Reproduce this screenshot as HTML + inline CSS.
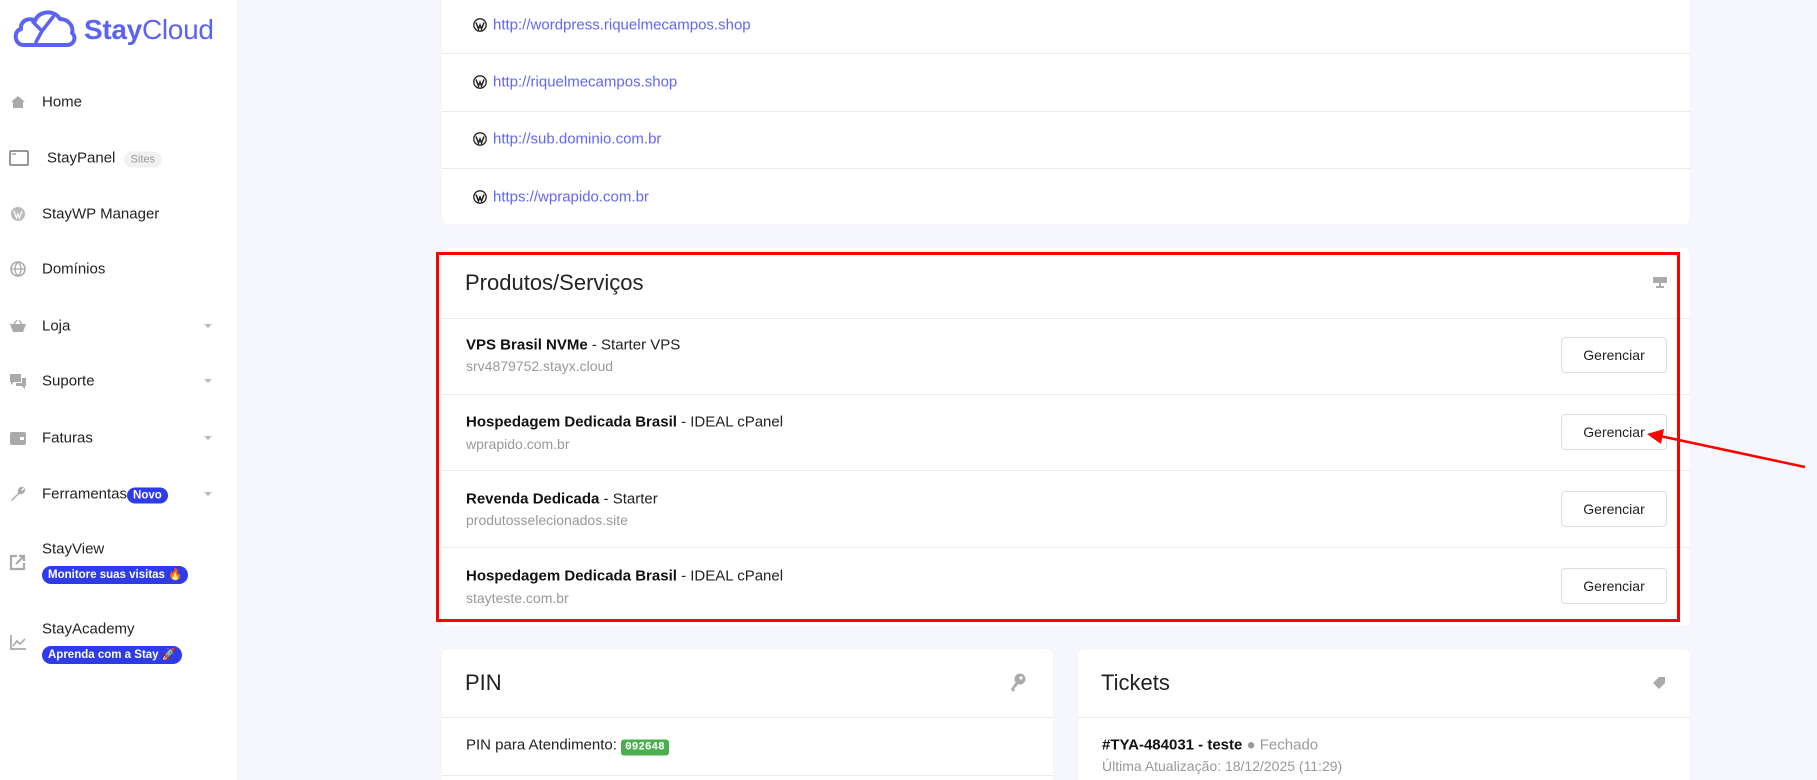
<!DOCTYPE html>
<html style="width:1817px;height:780px;overflow:hidden"><head><meta charset="utf-8"><style>
*{box-sizing:border-box;margin:0;padding:0}
html,body{width:1817px;height:780px;overflow:hidden}
body{background:#f6f7fc;font-family:"Liberation Sans",sans-serif;color:#222}
#wrap{position:relative;width:1817px;height:780px;overflow:hidden;background:#f6f7fc}
.side{position:absolute;left:0;top:0;width:238px;height:780px;background:#fff;border-right:1px solid #eef0f5}
.logo{position:absolute;left:12px;top:9px}
.logotxt{position:absolute;left:84px;top:14px;font-size:28px;color:#5b63f5;letter-spacing:-0.3px}
.logotxt b{font-weight:bold}
.mi{position:absolute;left:42px;font-size:15px;color:#222;transform:translateY(-50%)}
.ic{position:absolute;left:9px;width:18px;height:18px;transform:translateY(-50%)}
.chev{position:absolute;left:204px;width:0;height:0;border-left:4px solid transparent;border-right:4px solid transparent;border-top:4px solid #bbb}
.badge{position:absolute;left:42px;height:18px;border-radius:9px;background:#2e3be8;color:#fff;font-weight:bold;font-size:11.5px;line-height:18px;padding:0 6px}
.card{position:absolute;background:#fff;border-radius:6px;box-shadow:0 0 2px rgba(0,0,0,.03);overflow:hidden}
.sep{position:absolute;left:0;right:0;height:1px;background:#e9eaee}
.link{position:absolute;left:51px;font-size:15px;color:#6366f1;transform:translateY(-50%)}
.wp{position:absolute;left:31px;width:14px;height:14px;transform:translateY(-50%)}
.h{position:absolute;font-size:22px;color:#222;transform:translateY(-50%)}
.t{position:absolute;left:24px;font-size:15px;transform:translateY(-50%);white-space:nowrap}
.t b{color:#111}
.s{position:absolute;left:24px;font-size:14px;color:#999;transform:translateY(-50%)}
.btn{position:absolute;left:1119px;width:106px;height:36px;border:1px solid #ddd;border-radius:4px;font-size:14px;text-align:center;line-height:34px;color:#222}
</style></head><body><div id="wrap">
<div class="side">
<svg class="logo" width="66" height="40" viewBox="0 0 66 40"><path d="M12 36 C2 36 1 22 9 20 C8 11 18 8 23 12 C26 2 42 0 48 10 C56 10 62 17 60 24 C65 28 62 36 55 36 Z" fill="none" stroke="#5b63f5" stroke-width="4" stroke-linejoin="round"/><path d="M21 13 L30 22 L24 33 M30 22 L41 8" fill="none" stroke="#5b63f5" stroke-width="3.5" stroke-linecap="round"/></svg>
<div class="logotxt"><b>Stay</b>Cloud</div>

<svg class="ic" style="top:102px" viewBox="0 0 18 18"><path d="M2 9 L9 3 L16 9 H14 V15 H4 V9Z" fill="#aaa"/></svg>
<div class="mi" style="top:102px">Home</div>
<svg class="ic" style="top:158px;width:20px" viewBox="0 0 20 18"><rect x="1" y="2" width="18" height="14" rx="1" fill="none" stroke="#777" stroke-width="1.5"/><path d="M3 5h4" stroke="#777"/></svg>
<div class="mi" style="top:158px;left:47px">StayPanel <span style="background:#f1f1f3;color:#999;font-size:11px;border-radius:8px;padding:2px 7px;margin-left:4px">Sites</span></div>
<svg class="ic" style="top:214px" viewBox="0 0 18 18"><circle cx="9" cy="9" r="7" fill="#bbb"/><path d="M5 6 L7.5 13 L9 9 L10.5 13 L13 6" stroke="#fff" fill="none" stroke-width="1.2"/></svg>
<div class="mi" style="top:214px">StayWP Manager</div>
<svg class="ic" style="top:269px" viewBox="0 0 18 18"><circle cx="9" cy="9" r="7" fill="none" stroke="#aaa" stroke-width="1.6"/><path d="M2 9h14M9 2c-4 4-4 10 0 14M9 2c4 4 4 10 0 14" stroke="#aaa" fill="none" stroke-width="1.3"/></svg>
<div class="mi" style="top:269px">Domínios</div>
<svg class="ic" style="top:326px" viewBox="0 0 18 18"><path d="M1 7 H17 L14 15 H4Z" fill="#aaa"/><path d="M5 7 L8 3 M13 7 L10 3" stroke="#aaa" stroke-width="1.4"/></svg>
<div class="mi" style="top:326px">Loja</div><div class="chev" style="top:324px"></div>
<svg class="ic" style="top:381px" viewBox="0 0 18 18"><path d="M1 2 H12 V10 H5 L2 13 V10 H1Z" fill="#aaa"/><path d="M13 6 H17 V14 H16 V17 L13 14 H7 V11 H13Z" fill="#aaa"/></svg>
<div class="mi" style="top:381px">Suporte</div><div class="chev" style="top:379px"></div>
<svg class="ic" style="top:438px" viewBox="0 0 18 18"><rect x="1" y="3" width="16" height="13" rx="2" fill="#aaa"/><rect x="11" y="8" width="4" height="3" fill="#fff"/></svg>
<div class="mi" style="top:438px">Faturas</div><div class="chev" style="top:436px"></div>
<svg class="ic" style="top:494px" viewBox="0 0 18 18"><path d="M2 15 L9 8 C8 4 11 1 15 2 L12 5 L13 6 L16 3 C17 7 14 10 10 9 L3 16Z" fill="#aaa"/></svg>
<div class="mi" style="top:494px">Ferramentas<span style="background:#2e3be8;color:#fff;font-weight:bold;font-size:11.5px;border-radius:9px;padding:2px 6px">Novo</span></div><div class="chev" style="top:492px"></div>
<svg class="ic" style="top:562px" viewBox="0 0 18 18"><path d="M8 3 H2 V16 H15 V10" fill="none" stroke="#aaa" stroke-width="2.2"/><path d="M7 11 L15 3 M10 3 H15 V8" fill="none" stroke="#aaa" stroke-width="2.2"/></svg>
<div class="mi" style="top:549px">StayView</div>
<div class="badge" style="top:566px">Monitore suas visitas 🔥</div>
<svg class="ic" style="top:642px" viewBox="0 0 18 18"><path d="M2 2 V16 H17" fill="none" stroke="#aaa" stroke-width="1.8"/><path d="M4 13 L8 8 L11 11 L16 6" fill="none" stroke="#aaa" stroke-width="1.6"/></svg>
<div class="mi" style="top:629px">StayAcademy</div>
<div class="badge" style="top:646px">Aprenda com a Stay 🚀</div>
</div>

<div class="card" style="left:442px;top:-10px;width:1248px;height:234px">
<div class="sep" style="top:63px"></div><div class="sep" style="top:121px"></div><div class="sep" style="top:178px"></div>
</div>
<div style="position:absolute;left:442px;top:0;width:1248px;height:224px">
<svg class="wp" style="top:25px" viewBox="0 0 14 14"><circle cx="7" cy="7" r="6.2" fill="none" stroke="#222" stroke-width="1.3"/><path d="M3 4.5 L5.5 11 L7 7 L8.5 11 L11 4.5" stroke="#222" fill="none" stroke-width="1.5"/></svg><div class="link" style="top:25px">http://wordpress.riquelmecampos.shop</div>
<svg class="wp" style="top:82px" viewBox="0 0 14 14"><circle cx="7" cy="7" r="6.2" fill="none" stroke="#222" stroke-width="1.3"/><path d="M3 4.5 L5.5 11 L7 7 L8.5 11 L11 4.5" stroke="#222" fill="none" stroke-width="1.5"/></svg><div class="link" style="top:82px">http://riquelmecampos.shop</div>
<svg class="wp" style="top:139px" viewBox="0 0 14 14"><circle cx="7" cy="7" r="6.2" fill="none" stroke="#222" stroke-width="1.3"/><path d="M3 4.5 L5.5 11 L7 7 L8.5 11 L11 4.5" stroke="#222" fill="none" stroke-width="1.5"/></svg><div class="link" style="top:139px">http://sub.dominio.com.br</div>
<svg class="wp" style="top:197px" viewBox="0 0 14 14"><circle cx="7" cy="7" r="6.2" fill="none" stroke="#222" stroke-width="1.3"/><path d="M3 4.5 L5.5 11 L7 7 L8.5 11 L11 4.5" stroke="#222" fill="none" stroke-width="1.5"/></svg><div class="link" style="top:197px">https://wprapido.com.br</div>
</div>

<div class="card" style="left:442px;top:248px;width:1248px;height:378px">
<div class="h" style="left:23px;top:35px">Produtos/Serviços</div>
<svg style="position:absolute;left:1211px;top:29px" width="14" height="12" viewBox="0 0 14 12"><rect x="0" y="0" width="14" height="6" fill="#aaa"/><rect x="6" y="6" width="2" height="4" fill="#aaa"/><rect x="3" y="9" width="8" height="2" fill="#aaa"/></svg>
<div class="sep" style="top:70px"></div>
<div class="t" style="top:97px"><b>VPS Brasil NVMe</b> - Starter VPS</div><div class="s" style="top:118px">srv4879752.stayx.cloud</div>
<div class="btn" style="top:89px">Gerenciar</div>
<div class="sep" style="top:146px"></div>
<div class="t" style="top:174px"><b>Hospedagem Dedicada Brasil</b> - IDEAL cPanel</div><div class="s" style="top:196px">wprapido.com.br</div>
<div class="btn" style="top:166px">Gerenciar</div>
<div class="sep" style="top:222px"></div>
<div class="t" style="top:251px"><b>Revenda Dedicada</b> - Starter</div><div class="s" style="top:272px">produtosselecionados.site</div>
<div class="btn" style="top:243px">Gerenciar</div>
<div class="sep" style="top:299px"></div>
<div class="t" style="top:328px"><b>Hospedagem Dedicada Brasil</b> - IDEAL cPanel</div><div class="s" style="top:350px">stayteste.com.br</div>
<div class="btn" style="top:320px">Gerenciar</div>
</div>

<div style="position:absolute;left:436px;top:252px;width:1244px;height:370px;border:3px solid #f00"></div>
<svg style="position:absolute;left:0;top:0" width="1817" height="780"><line x1="1805" y1="467" x2="1660" y2="436" stroke="#f00" stroke-width="2.5"/><polygon points="1647,434 1664,429 1661,444" fill="#f00"/></svg>

<div class="card" style="left:442px;top:649px;width:611px;height:131px;border-radius:6px 6px 0 0">
<div class="h" style="left:23px;top:34px">PIN</div>
<svg style="position:absolute;left:567px;top:24px" width="18" height="20" viewBox="0 0 18 20"><circle cx="11" cy="6" r="5.5" fill="#aaa"/><path d="M7 9 L2 16 L4 19 L6 17 L5 15 L7 14 L9 11Z" fill="#aaa"/><circle cx="12" cy="5" r="1.6" fill="#fff"/></svg>
<div class="sep" style="top:68px"></div>
<div class="t" style="top:96px">PIN para Atendimento: <span style="background:#4cae4f;color:#fff;font-size:11px;font-weight:bold;border-radius:3px;padding:2px 4px;font-family:'Liberation Mono',monospace">092648</span></div>
<div class="sep" style="top:126px"></div>
</div>
<div class="card" style="left:1078px;top:649px;width:612px;height:131px;border-radius:6px 6px 0 0">
<div class="h" style="left:23px;top:34px">Tickets</div>
<svg style="position:absolute;left:575px;top:27px" width="13" height="13" viewBox="0 0 13 13"><path d="M6 1 H12 V7 L6 13 L0 7Z" fill="#aaa"/></svg>
<div class="sep" style="top:68px"></div>
<div class="t" style="top:96px"><b>#TYA-484031 - teste</b> <span style="color:#999">● Fechado</span></div>
<div class="s" style="top:117px">Última Atualização: 18/12/2025 (11:29)</div>
</div>
</div></body></html>
